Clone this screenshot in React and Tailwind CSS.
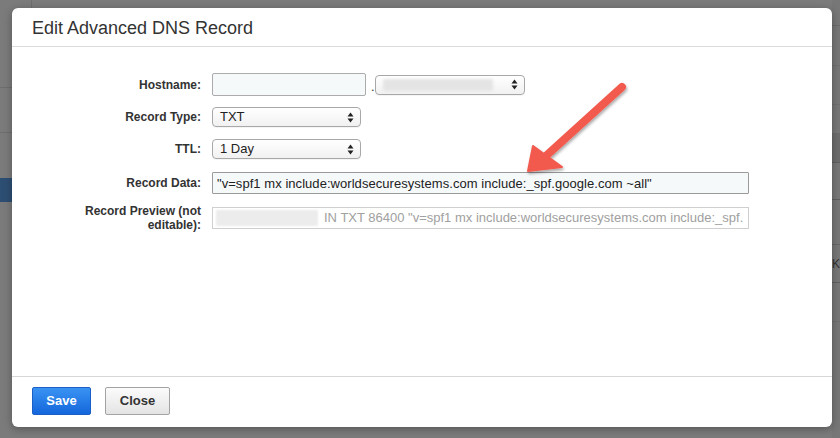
import { useState } from 'react';

const FONT = { fontFamily: '"Liberation Sans", Arial, Helvetica, sans-serif' };

function SelectArrows() {
  return (
    <svg width="7" height="11" viewBox="0 0 7 11" className="shrink-0">
      <path d="M3.5 0.5 L6.5 4.5 L0.5 4.5 Z" fill="#222" />
      <path d="M3.5 10.5 L6.5 6.5 L0.5 6.5 Z" fill="#222" />
    </svg>
  );
}

function FakeSelect({ width, children }) {
  return (
    <div
      className="h-[20px] rounded-[4px] border border-[#a8a8a8] bg-gradient-to-b from-white to-[#f1f1f1] flex items-center pl-[7px] pr-[6px] text-[13px] text-[#222] shadow-[0_1px_0_rgba(0,0,0,0.04)]"
      style={{ width }}
    >
      <div className="flex-1 min-w-0">{children}</div>
      <SelectArrows />
    </div>
  );
}

function Row({ label, className = '', children }) {
  return (
    <div className={`flex items-center ${className}`}>
      <div className="w-[189px] text-right text-[12px] font-bold text-[#333] leading-[14px]">{label}</div>
      <div className="ml-[11px] flex items-center">{children}</div>
    </div>
  );
}

export default function App() {
  const [data, setData] = useState('"v=spf1 mx include:worldsecuresystems.com include:_spf.google.com ~all"');

  return (
    <div className="relative w-[840px] h-[438px] overflow-hidden bg-[#7b7b7b]" style={FONT}>
      {/* page behind the overlay */}
      <div className="absolute inset-y-0 left-0 w-[12px] flex flex-col">
        <div className="h-[88px] border-b border-[#6e6e6e]" />
        <div className="h-[45px] border-b border-[#6e6e6e]" />
        <div className="h-[45px]" />
        <div className="h-[24px] bg-[#2d4e73]" />
      </div>
      <div className="absolute top-0 left-[31px] w-px h-[8px] bg-[#6e6e6e]" />
      <div className="absolute inset-y-0 right-0 w-[8px] flex flex-col bg-[#777]">
        <div className="h-[26px] border-b border-[#6a6a6a]" />
        <div className="h-[40px] border-b border-[#6f6f6f]" />
        <div className="h-[39px] border-b border-[#6f6f6f]" />
        <div className="h-[28px]" />
        <div className="h-[30px] bg-[#6c6c6c] border-b border-[#5f5f5f]" />
        <div className="h-[37px] border-b border-[#5f5f5f]" />
        <div className="h-[45px] border-b border-[#666]" />
        <div className="h-[38px] border-b border-[#5f5f5f] flex items-center text-[12px] text-[#333]">K</div>
        <div className="h-[39px] border-b border-[#6f6f6f]" />
      </div>

      {/* modal */}
      <div className="absolute left-[12px] top-[8px] w-[820px] h-[419px] bg-white rounded-[6px] flex flex-col shadow-[0_2px_8px_rgba(0,0,0,0.3)]">
        <div className="h-[39px] border-b border-[#dcdcdc] flex items-center pl-[20px] pt-[1px]">
          <h1 className="text-[18px] text-[#333] leading-none">Edit Advanced DNS Record</h1>
        </div>

        <div className="flex-1 pt-[26px]">
          <Row label="Hostname:" className="h-[23px]">
            <div className="w-[154px] h-[23px] border border-[#ababab] bg-[#f5f9fa] rounded-[2px]" />
            <span className="ml-[5px] text-[13px] text-[#333] leading-none mt-[4px]">.</span>
            <FakeSelect width={150}>
              <div className="w-[110px] h-[12px] bg-[#e4e4e4] rounded-[2px] blur-[1.5px]" />
            </FakeSelect>
          </Row>
          <Row label="Record Type:" className="mt-[11px] h-[20px]">
            <FakeSelect width={149}>TXT</FakeSelect>
          </Row>
          <Row label="TTL:" className="mt-[12px] h-[20px]">
            <FakeSelect width={149}>1 Day</FakeSelect>
          </Row>
          <Row label="Record Data:" className="mt-[13px] h-[22px]">
            <input
              value={data}
              onChange={(e) => setData(e.target.value)}
              className="w-[537px] h-[22px] border border-[#9a9a9a] bg-[#f6f9fa] px-[4px] text-[13px] tracking-[0.05px] text-[#222] outline-none rounded-[1px]"
              style={FONT}
            />
          </Row>
          <Row label={<>Record Preview (not<br />editable):</>} className="mt-[13px] h-[22px]">
            <div className="w-[537px] h-[22px] border border-[#cfcfcf] bg-white flex items-center pl-[3px] text-[13px] text-[#a0a0a0] whitespace-nowrap overflow-hidden">
              <div className="w-[102px] h-[16px] bg-[#ececec] blur-[1px] shrink-0" />
              <span className="ml-[6px]">IN TXT 86400 "v=spf1 mx include:worldsecuresystems.com include:_spf.</span>
            </div>
          </Row>
        </div>

        <div className="h-[51px] border-t border-[#d6d6d6] flex items-start pl-[20px] pt-[10px] gap-[14px]">
          <button className="w-[59px] h-[28px] rounded-[2px] border border-[#1a5fc7] bg-gradient-to-b from-[#3a93f3] to-[#1466db] text-white text-[13px] font-bold" style={FONT}>
            Save
          </button>
          <button className="w-[65px] h-[28px] rounded-[2px] border border-[#a3a3a3] bg-gradient-to-b from-[#fbfbfb] to-[#e4e4e4] text-[#333] text-[13px] font-bold" style={FONT}>
            Close
          </button>
        </div>
      </div>

      {/* annotation arrow */}
      <svg className="absolute inset-0 pointer-events-none" width="840" height="438">
        <defs>
          <filter id="sh" x="-20%" y="-20%" width="140%" height="140%">
            <feDropShadow dx="1" dy="2" stdDeviation="1.5" floodColor="#000" floodOpacity="0.35" />
          </filter>
        </defs>
        <g filter="url(#sh)">
          <line x1="622" y1="87" x2="547" y2="155" stroke="#f25a4e" strokeWidth="8" strokeLinecap="round" />
          <path d="M528 171 L533 146 L562 167 Z" fill="#f25a4e" stroke="#f25a4e" strokeWidth="2" strokeLinejoin="round" />
        </g>
      </svg>
    </div>
  );
}
